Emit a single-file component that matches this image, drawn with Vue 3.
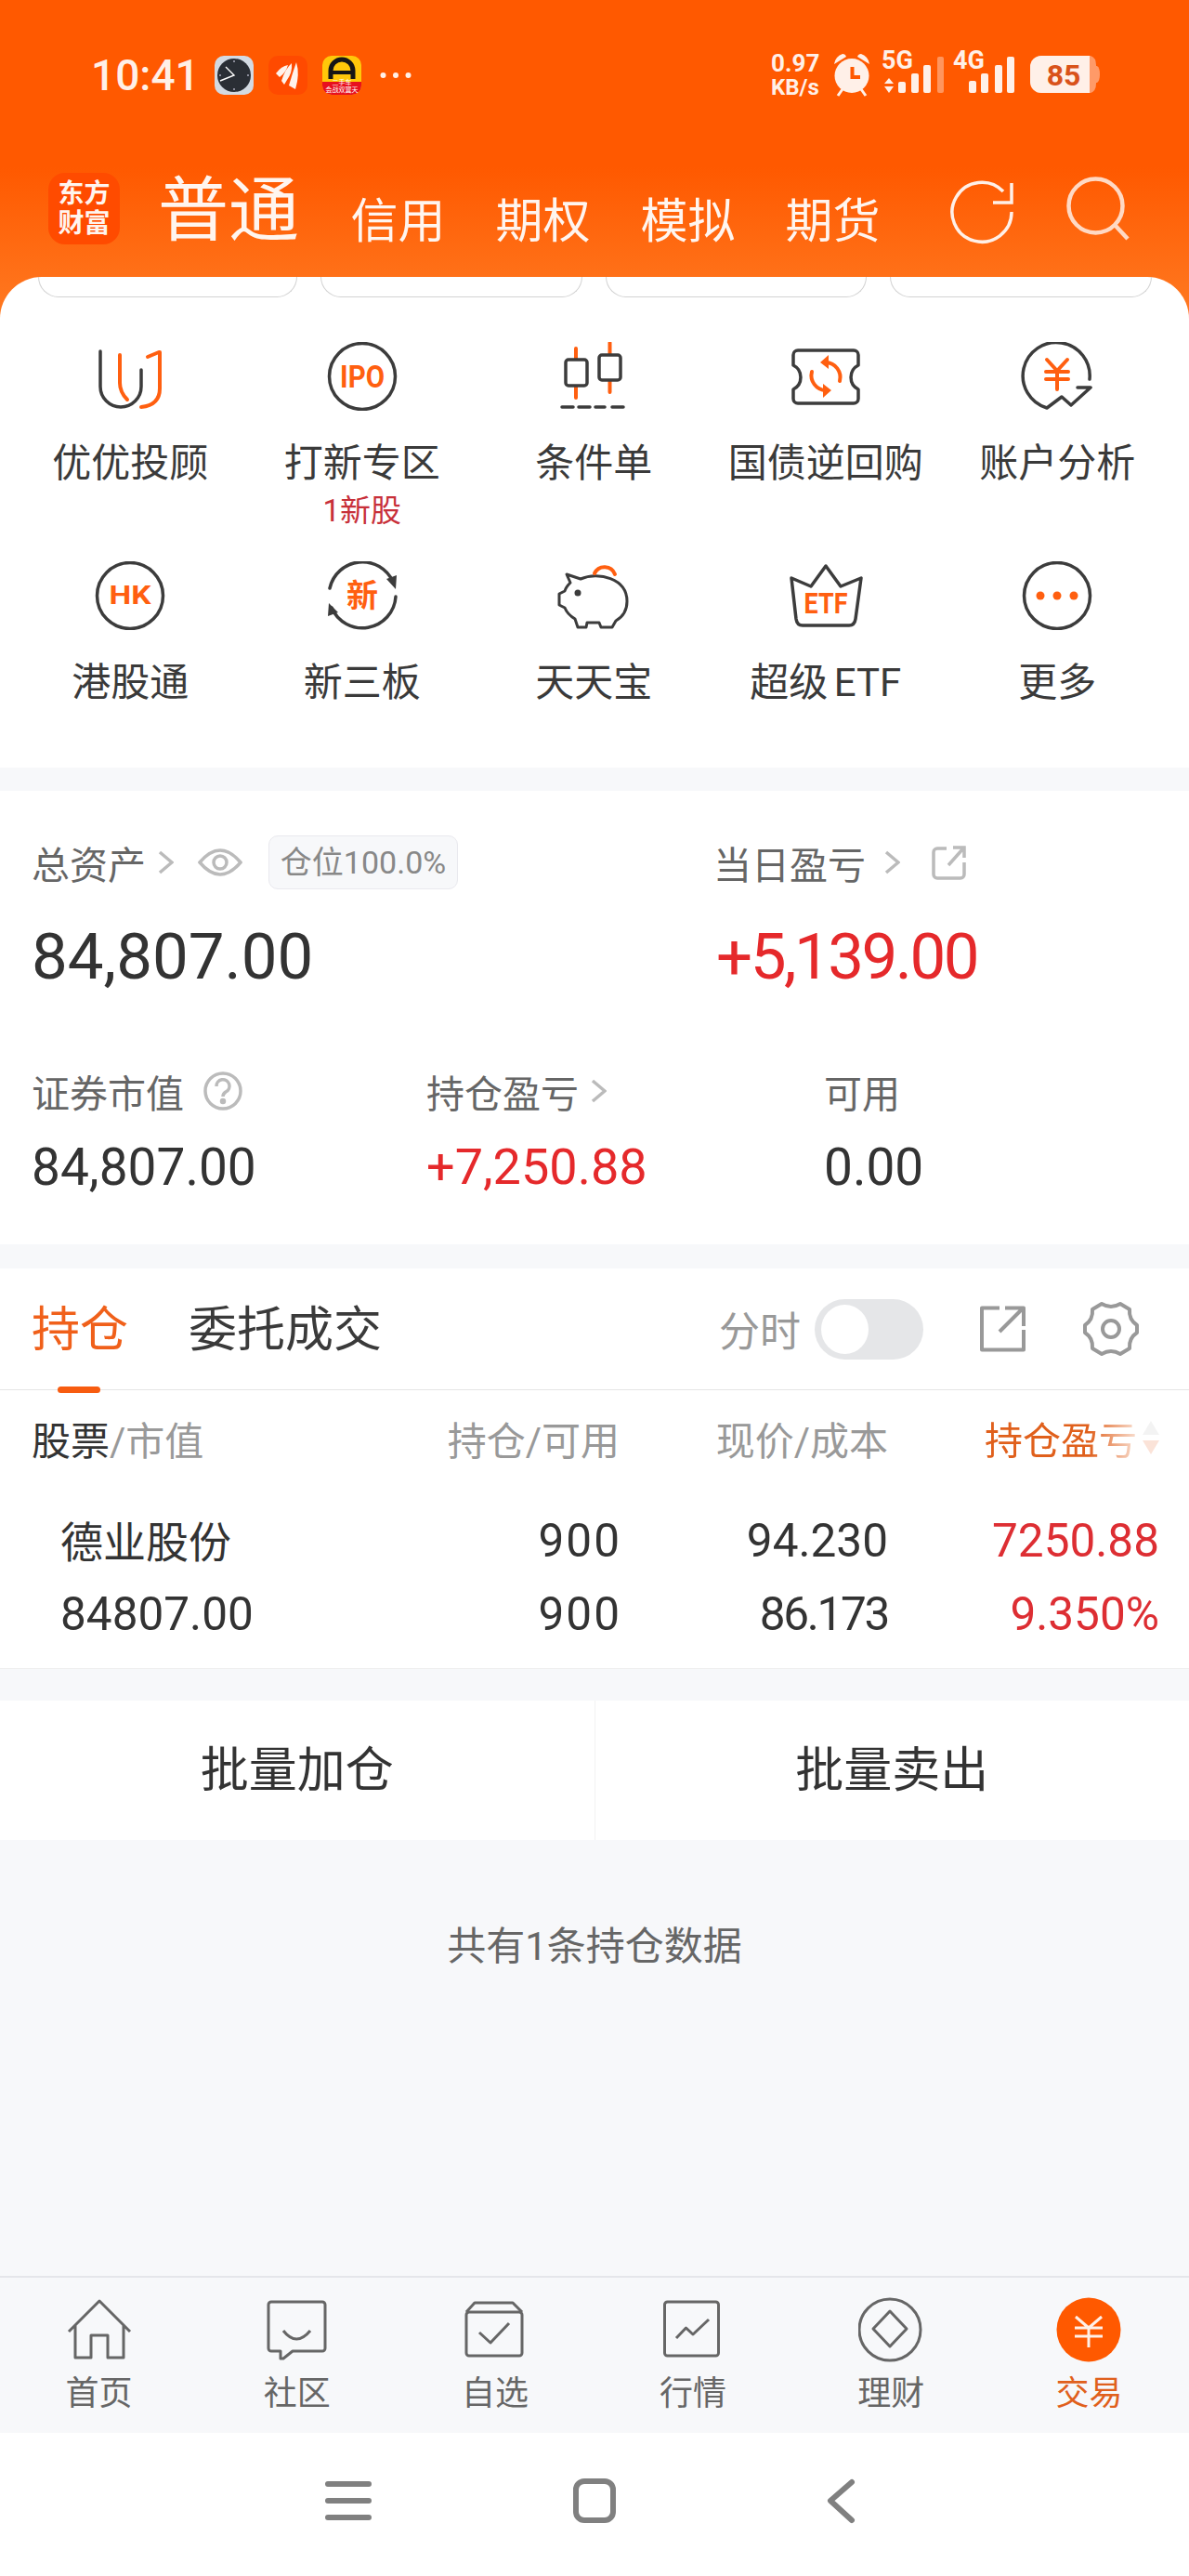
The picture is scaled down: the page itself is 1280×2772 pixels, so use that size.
<script setup>
const rowOne = [
  { icon: 'uu', label: '优优投顾' },
  { icon: 'ipo', label: '打新专区', sub: '1新股' },
  { icon: 'candle', label: '条件单' },
  { icon: 'coupon', label: '国债逆回购' },
  { icon: 'yen', label: '账户分析' }
]
const rowTwo = [
  { icon: 'hk', label: '港股通' },
  { icon: 'xin', label: '新三板' },
  { icon: 'pig', label: '天天宝' },
  { icon: 'etf', label: '超级 ETF' },
  { icon: 'more', label: '更多' }
]
const entries = [...rowOne, ...rowTwo]
const tabs = ['信用', '期权', '模拟', '期货']
const pills = [279, 282, 281, 282]
const bottomTabs = [
  { key: 'home', label: '首页' },
  { key: 'chat', label: '社区' },
  { key: 'fav', label: '自选' },
  { key: 'market', label: '行情' },
  { key: 'wealth', label: '理财' },
  { key: 'trade', label: '交易' }
]
</script>

<template>
  <div class="page">
    <div class="top">
      <div class="status">
        <span class="time">10:41</span>
        <svg class="app" viewBox="0 0 42 42">
          <rect width="42" height="42" rx="10" fill="#D3DAE2" />
          <circle cx="21" cy="21" r="18" fill="#2A2E35" />
          <path d="M21 5v2M21 35v2M5 21h2M35 21h2" stroke="#AAB" stroke-width="1.5" />
          <path d="M12 12L21 21L6 27" fill="none" stroke="#fff" stroke-width="1.4" />
        </svg>
        <svg class="app" viewBox="0 0 42 42">
          <rect width="42" height="42" rx="10" fill="#FF4A00" />
          <path d="M8 19Q14 11 21 10Q19 18 12 23Z" fill="#FFF3EC" />
          <path d="M14 27Q18 14 25 8Q26 18 20 26L17 31Z" fill="#FFF3EC" />
          <path d="M22 32Q26 18 30 7Q34 20 29 36Z" fill="#FFF3EC" />
        </svg>
        <svg class="app" viewBox="0 0 42 42">
          <rect width="42" height="42" rx="10" fill="#FFC80A" />
          <path d="M0 28H42V32A10 10 0 0 1 32 42H10A10 10 0 0 1 0 32Z" fill="#E8101E" />
          <path d="M9 25V16A12 12 0 0 1 33 16V25" fill="none" stroke="#161616" stroke-width="5" />
          <path d="M10 18H32" stroke="#161616" stroke-width="4" />
          <text x="21" y="31" class="tiny">二手车</text>
          <text x="21" y="39" class="tiny">会战双翼天</text>
        </svg>
        <svg class="dots" viewBox="0 0 34 8">
          <circle cx="3.5" cy="4" r="3" />
          <circle cx="17" cy="4" r="3" />
          <circle cx="30.5" cy="4" r="3" />
        </svg>
        <div class="status-right">
          <div class="net"><span class="net-num">0.97</span><span>KB/s</span></div>
          <svg width="40" height="50" viewBox="0 0 40 50">
            <circle cx="20" cy="25.5" r="18.5" fill="#FFF0E8" />
            <path d="M1 13Q2 5 10 2Q13 2 14 5Z" fill="#FFF0E8" />
            <path d="M39 13Q38 5 30 2Q27 2 26 5Z" fill="#FFF0E8" />
            <path d="M10 40L5 47M30 40L35 47" stroke="#FFF0E8" stroke-width="3" />
            <path d="M20.5 16V27H29" fill="none" stroke="#FF5900" stroke-width="4" />
          </svg>
          <svg class="signal" width="67" height="56" viewBox="0 -6 67 56">
            <text x="0" y="18" class="sig">5G</text>
            <path d="M8 28L13 34H3Z M8 44L13 37H3Z" fill="#FFF0E8" />
            <rect x="18" y="32" width="8" height="12" rx="2" fill="#FFF0E8" />
            <rect x="32" y="23" width="8" height="21" rx="2" fill="#FFF0E8" />
            <rect x="45" y="14" width="8" height="30" rx="2" fill="#FFF0E8" />
            <rect x="60" y="5" width="7" height="39" rx="2" fill="#FFF0E8" opacity=".4" />
          </svg>
          <svg class="signal" width="66" height="56" viewBox="0 -6 66 56">
            <text x="0" y="18" class="sig">4G</text>
            <rect x="17" y="31" width="8" height="13" rx="2" fill="#FFF0E8" />
            <rect x="30" y="23" width="8" height="21" rx="2" fill="#FFF0E8" />
            <rect x="45" y="14" width="8" height="30" rx="2" fill="#FFF0E8" />
            <rect x="58" y="5" width="8" height="39" rx="2" fill="#FFF0E8" />
          </svg>
          <svg width="75" height="50" viewBox="0 0 75 50">
            <path d="M12 4H65Q71 6 71 14V34Q71 42 65 44H12A12 12 0 0 1 0 32V16A12 12 0 0 1 12 4Z" fill="#FF9A68" />
            <path d="M12 4H64V44H12A12 12 0 0 1 0 32V16A12 12 0 0 1 12 4Z" fill="#FFF0E8" />
            <path d="M71 15H72Q75 17 75 24Q75 31 72 33H71Z" fill="#FF9A68" />
            <text x="36" y="36" class="batt">85</text>
          </svg>
        </div>
      </div>

      <div class="account-bar">
        <div class="logo"><span>东方</span><span>财富</span></div>
        <span class="account-main">普通</span>
        <div class="account-tabs">
          <span v-for="t in tabs" :key="t">{{ t }}</span>
        </div>
        <svg class="refresh" width="70" height="70" viewBox="0 0 70 70">
          <path d="M67 35A32 32 0 1 1 58 13" />
          <path d="M67 4V25H47" />
        </svg>
        <svg class="search" width="70" height="70" viewBox="0 0 70 70">
          <circle cx="32.5" cy="32.5" r="29" />
          <path d="M54 54L67 68" />
        </svg>
      </div>

      <div class="card">
        <div class="pills">
          <div v-for="(w, i) in pills" :key="i" class="pill" :style="{ width: w + 'px' }"></div>
        </div>
        <div class="entry-grid">
          <div v-for="e in entries" :key="e.label" class="entry">
            <svg class="entry-icon" width="90" height="74" viewBox="0 0 90 74">
              <template v-if="e.icon === 'uu'">
                <path d="M13 10V48A22 22 0 0 0 57 48V30" class="dk" />
                <path d="M34 14V44Q34 54 42 62" class="og" />
                <path d="M64 16L76 11H77V50Q77 68 57 70" class="og" />
              </template>
              <template v-else-if="e.icon === 'ipo'">
                <circle cx="45" cy="37" r="35.5" class="dk" />
                <text x="45" y="49" class="mark" font-size="34" textLength="48" lengthAdjust="spacingAndGlyphs">IPO</text>
              </template>
              <template v-else-if="e.icon === 'candle'">
                <path d="M26 7V60M62.500 1V54" class="og" stroke-width="5" />
                <rect x="15" y="19" width="23" height="28" rx="3" class="dk wh" />
                <rect x="51" y="14" width="23" height="27" rx="3" class="dk wh" />
                <path d="M11 70H23M29 70H41M47 70H57M65 70H77" class="dk" />
              </template>
              <template v-else-if="e.icon === 'coupon'">
                <path d="M15 9H75A5 5 0 0 1 80 14V25A14.600 14.600 0 0 0 80 51V61A5 5 0 0 1 75 66H15A5 5 0 0 1 10 61V51A14.600 14.600 0 0 0 10 25V14A5 5 0 0 1 15 9Z" class="dk" />
                <path d="M45 22A16 16 0 0 1 60 42M45 52A16 16 0 0 1 30 32" class="og" />
                <path d="M48 14V29L39 22ZM42 45V60L51 52Z" fill="#FF5F10" />
              </template>
              <template v-else-if="e.icon === 'yen'">
                <path d="M80 40A36 36 0 1 0 34 71L50 59L60 68L81 49H67" class="dk" />
                <path d="M34 19L45 31L56 19M33 32H57M33 40H57M45 31V51" class="og" stroke-width="5" />
              </template>
              <template v-else-if="e.icon === 'hk'">
                <circle cx="45" cy="37" r="35.500" class="dk" />
                <text x="45" y="46" class="mark" font-size="27" textLength="45" lengthAdjust="spacingAndGlyphs">HK</text>
              </template>
              <template v-else-if="e.icon === 'xin'">
                <path d="M10 29A36 36 0 0 1 78 22" class="dk" />
                <path d="M81 38A36 36 0 0 1 12 50" class="dk" />
                <path d="M81 30L71 19L82 15ZM9 45L19 55L8 59Z" fill="#3C3C3C" />
                <text x="45" y="49" class="mark" font-size="34">新</text>
              </template>
              <template v-else-if="e.icon === 'pig'">
                <path d="M16 14L31 19C50 11 81 18 81 43C81 53 76 60 69 64L65 71H53L51 66H38L37 71H28L25 62C20 59 16 55 14 50L8 47V35L14 32C15 28 18 25 20 23Z" class="dk thin" />
                <circle cx="28" cy="34" r="3.500" fill="#3C3C3C" />
                <path d="M46 13A12 12 0 0 1 68 14" class="og" />
              </template>
              <template v-else-if="e.icon === 'etf'">
                <path d="M8 18L29 27L45 5L61 27L83 18L77 62Q76 69 70 69H20Q14 69 13 62Z" class="dk" />
                <text x="45" y="56" class="mark" font-size="32" textLength="47" lengthAdjust="spacingAndGlyphs">ETF</text>
              </template>
              <template v-else>
                <circle cx="45" cy="37" r="35.500" class="dk" />
                <circle cx="27" cy="37" r="4.500" fill="#FF5F10" />
                <circle cx="45" cy="37" r="4.500" fill="#FF5F10" />
                <circle cx="63" cy="37" r="4.500" fill="#FF5F10" />
              </template>
            </svg>
            <div class="entry-label">{{ e.label }}</div>
            <div v-if="e.sub" class="entry-sub">{{ e.sub }}</div>
          </div>
        </div>
      </div>
    </div>

    <section class="assets">
      <div class="asset-row">
        <div class="col-total">
          <div class="label-line big">
            <span>总资产</span>
            <svg class="chev" width="17" height="26" viewBox="0 0 17 26"><path d="M2 2L15 13L2 24" /></svg>
            <svg class="eye" width="48" height="32" viewBox="0 0 48 32">
              <path d="M2 16Q24 -10 46 16Q24 42 2 16Z" />
              <circle cx="24" cy="16" r="7" />
            </svg>
            <span class="badge">仓位100.0%</span>
          </div>
          <div class="value-big">84,807.00</div>
        </div>
        <div class="col-today">
          <div class="label-line big">
            <span>当日盈亏</span>
            <svg class="chev" width="17" height="26" viewBox="0 0 17 26"><path d="M2 2L15 13L2 24" /></svg>
            <svg class="share-small" width="37" height="37" viewBox="0 0 37 37">
              <path d="M16 3H6A4 4 0 0 0 2 7V31A4 4 0 0 0 6 35H31A4 4 0 0 0 35 31V18" />
              <path d="M18 21L34 3M23 2H35V13" />
            </svg>
          </div>
          <div class="value-big red">+5,139.00</div>
        </div>
      </div>
      <div class="asset-row second">
        <div class="col-a">
          <div class="label-line">
            <span>证券市值</span>
            <svg class="help" width="42" height="42" viewBox="0 0 42 42">
              <circle cx="21" cy="21" r="19" />
              <path d="M14 16A7 7 0 1 1 24 22Q21 24 21 27" />
              <circle class="fill" cx="21" cy="32" r="1.500" />
            </svg>
          </div>
          <div class="value">84,807.00</div>
        </div>
        <div class="col-b">
          <div class="label-line">
            <span>持仓盈亏</span>
            <svg class="chev" width="17" height="26" viewBox="0 0 17 26"><path d="M2 2L15 13L2 24" /></svg>
          </div>
          <div class="value red">+7,250.88</div>
        </div>
        <div class="col-c">
          <div class="label-line"><span>可用</span></div>
          <div class="value">0.00</div>
        </div>
      </div>
    </section>

    <section class="positions">
      <div class="pos-tabs">
        <span class="pos-tab active">持仓</span>
        <span class="pos-tab">委托成交</span>
        <div class="pos-tools">
          <span class="fen">分时</span>
          <div class="toggle"><i></i></div>
          <svg class="tool share" width="50" height="50" viewBox="0 0 50 50">
            <path d="M22 2.500H3V47.500H48V26" />
            <path d="M22 28L47 3M28 2.500H48V22" />
          </svg>
          <svg class="tool gear" width="60" height="60" viewBox="0 0 60 60">
            <path d="M20 3Q30 9 40 3L50 9Q49 20 58 26V34Q49 40 50 51L40 57Q30 51 20 57L10 51Q11 40 2 34V26Q11 20 10 9Z" />
            <circle cx="30" cy="30" r="9" />
          </svg>
        </div>
      </div>
      <div class="t-head">
        <div><span class="dark">股票</span>/市值</div>
        <div class="r">持仓/可用</div>
        <div class="r">现价/成本</div>
        <div class="r sort">
          <span class="sort-text">持仓盈亏</span>
          <svg width="18" height="36" viewBox="0 0 18 36">
            <path d="M9 0L18 15H0Z" fill="#F3F3F3" />
            <path d="M9 36L18 21H0Z" fill="#FBE3D8" />
          </svg>
        </div>
      </div>
      <div class="t-row first">
        <div class="name">德业股份</div>
        <div class="r wide">900</div>
        <div class="r">94.230</div>
        <div class="r red2">7250.88</div>
      </div>
      <div class="t-row">
        <div class="name">84807.00</div>
        <div class="r wide">900</div>
        <div class="r narrow">86.173</div>
        <div class="r red2">9.350%</div>
      </div>
    </section>

    <section class="actions">
      <div class="action">批量加仓</div>
      <div class="action">批量卖出</div>
    </section>

    <div class="summary">共有1条持仓数据</div>

    <nav class="tabbar">
      <div v-for="t in bottomTabs" :key="t.key" class="tabitem" :class="{ on: t.key === 'trade' }">
        <svg width="70" height="70" viewBox="0 0 70 70">
          <path v-if="t.key === 'home'" d="M2 37L35 4L68 37M9 30V65H26V41H44V65H61V30" />
          <template v-else-if="t.key === 'chat'">
            <path d="M7 5H62A3 3 0 0 1 65 8V55A3 3 0 0 1 62 58H30L20 66H17V58H7A3 3 0 0 1 4 55V8A3 3 0 0 1 7 5Z" />
            <path d="M20 36Q34 54 49 36" />
          </template>
          <template v-else-if="t.key === 'fav'">
            <rect x="4" y="16" width="60" height="47" rx="3" />
            <path d="M4 16L13 6H54L64 16M18 38L30 49L50 28" />
          </template>
          <template v-else-if="t.key === 'market'">
            <rect x="4.500" y="5" width="58" height="58" rx="3" />
            <path d="M17 44L27.500 33L35 40L52 24" />
          </template>
          <template v-else-if="t.key === 'wealth'">
            <circle cx="34" cy="35" r="33" />
            <path d="M34 15L52 34L34 53L16 34Z" />
          </template>
          <template v-else>
            <circle class="dot" cx="35" cy="35" r="34.500" />
            <path class="yuan" d="M21 21L35 33L49 21M20 33H50M20 42H50M35 33V54" />
          </template>
        </svg>
        <span>{{ t.label }}</span>
      </div>
    </nav>

    <div class="sysnav">
      <svg width="60" height="60" viewBox="0 0 60 60"><path d="M8 12H52M8 30H52M8 48H52" /></svg>
      <svg width="60" height="60" viewBox="0 0 60 60"><rect x="10" y="9" width="40" height="42" rx="9" /></svg>
      <svg width="60" height="60" viewBox="0 0 60 60"><path d="M42 10L19 30L42 51" /></svg>
    </div>
  </div>
</template>

<style>
html, body { margin: 0; padding: 0; background: #F7F8FA; }
</style>

<style scoped>
.page {
  width: 1280px;
  height: 2772px;
  display: flex;
  flex-direction: column;
  background: #F7F8FA;
  font-family: Roboto, "Noto Sans CJK SC", sans-serif;
  color: #333;
  overflow: hidden;
}
svg { display: block; flex: none; }
.r { text-align: right; }

.top {
  background: linear-gradient(#FF5900 0, #FF5900 180px, #FF7A22 345px) no-repeat;
  background-size: 100% 345px;
}
.status {
  height: 162px;
  display: flex;
  align-items: center;
  padding: 0 96px 0 98px;
  color: #FFF0E8;
}
.time { font-size: 46px; font-weight: 500; width: 133px; line-height: 46px; }
.app { width: 42px; height: 42px; margin-right: 16px; }
.tiny { font-size: 7px; fill: #fff; text-anchor: middle; }
.dots { width: 34px; height: 8px; fill: #FFF0E8; margin-left: 4px; }
.status-right { margin-left: auto; display: flex; align-items: center; height: 50px; }
.status-right svg { margin-left: 12px; }
.status-right svg:nth-child(2) { margin-left: 13px; }
.status-right svg:nth-child(4) { margin-left: 10px; }
.status-right svg:nth-child(5) { margin-left: 17px; }
.status-right .signal { margin-bottom: 6px; }
.net { display: flex; flex-direction: column; font-size: 24px; font-weight: 700; line-height: 26px; width: 54px; }
.net-num { font-size: 26px; }
.sig { font-size: 27px; font-weight: 700; fill: #FFF0E8; }
.batt { font-size: 32px; font-weight: 700; fill: #D9521A; text-anchor: middle; }

.account-bar {
  height: 136px;
  display: flex;
  align-items: flex-start;
  padding-left: 52px;
  color: #FFF5EF;
}
.logo {
  width: 77px;
  height: 77px;
  margin-top: 24px;
  border-radius: 18px;
  background: #FF4B00;
  display: flex;
  flex-direction: column;
  align-items: center;
  justify-content: center;
  font-size: 28px;
  font-weight: 700;
  line-height: 32px;
}
.account-main { font-size: 76px; line-height: 88px; margin: 21px 55.5px 0 41px; width: 152px; }
.account-tabs { display: flex; gap: 54px; font-size: 51px; line-height: 60px; margin-top: 47px; }
.refresh { margin: 31px 0 0 74.5px; }
.refresh path { fill: none; stroke: #FFF0E8; stroke-width: 3.5; }
.search { margin: 27px 0 0 55px; }
.search circle, .search path { fill: none; stroke: #FFD9C4; stroke-width: 4.5; }

.card {
  background: #fff;
  border-radius: 45px 45px 0 0;
  height: 528px;
}
.pills { display: flex; gap: 25px; padding-left: 41px; height: 22px; }
.pill {
  box-sizing: border-box;
  height: 22px;
  border: 1.5px solid #D2D2D2;
  border-top: none;
  border-radius: 0 0 30px 30px;
}
.entry-grid {
  display: grid;
  grid-template-columns: repeat(5, 249.5px);
  grid-template-rows: 236px 222px;
  padding: 48px 17px 0 15.5px;
}
.entry { display: flex; flex-direction: column; align-items: center; }
.entry-label { font-size: 42px; line-height: 50px; margin-top: 32px; color: #3A3A3A; white-space: nowrap; word-spacing: -4px; }
.entry-sub { font-size: 33px; line-height: 40px; margin-top: 6px; color: #C8303A; }
.dk { fill: none; stroke: #3C3C3C; stroke-width: 3.5; stroke-linecap: round; stroke-linejoin: round; }
.thin { stroke-width: 3; }
.wh { fill: #fff; }
.og { fill: none; stroke: #FF5F10; stroke-width: 4; stroke-linecap: round; stroke-linejoin: round; }
.mark { fill: #FF5F10; font-weight: 700; text-anchor: middle; }

.assets { margin-top: 25px; height: 488px; box-sizing: border-box; padding: 47px 0 0 34px; background: #fff; }
.asset-row { display: flex; }
.asset-row.second { margin-top: 79px; }
.col-total { width: 734px; }
.col-a { width: 425px; }
.col-b { width: 428px; }
.label-line { display: flex; align-items: center; height: 50px; font-size: 41px; color: #666; white-space: nowrap; }
.label-line.big { height: 60px; }
.chev { margin-left: 13px; }
.col-today .chev { margin-left: 20px; }
.chev path, .eye path, .eye circle, .help path, .help circle, .share-small path {
  fill: none;
  stroke: #BBB;
  stroke-width: 3.5;
}
.eye { margin-left: 26px; }
.help { margin-left: 21px; }
.help .fill { fill: #BBB; }
.share-small { margin-left: 34px; }
.badge {
  margin-left: 28px;
  box-sizing: border-box;
  width: 204px;
  height: 58px;
  border: 1px solid #E9E9EE;
  border-radius: 10px;
  background: #F7F8FA;
  color: #888;
  font-size: 34px;
  line-height: 56px;
  text-align: center;
}
.value-big { font-size: 69px; line-height: 80px; margin-top: 32px; color: #333; }
.value-big.red { margin-left: 3px; letter-spacing: -2.5px; }
.value { font-size: 55px; line-height: 60px; margin-top: 27px; color: #333; }
.value.red { font-size: 54px; }
.red { color: #E5292B !important; }

.positions { margin-top: 26px; height: 431px; box-sizing: border-box; background: #fff; border-bottom: 1px solid #EEE; }
.pos-tabs {
  height: 131px;
  box-sizing: border-box;
  border-bottom: 1px solid #E5E5E5;
  display: flex;
  align-items: center;
  padding: 3px 54px 0 34px;
}
.pos-tab { position: relative; font-size: 52px; line-height: 60px; color: #3A3A3A; margin-right: 65px; }
.pos-tab.active { color: #F0601A; }
.pos-tab.active::after {
  content: "";
  position: absolute;
  left: 28px;
  width: 46px;
  bottom: -37px;
  height: 7px;
  border-radius: 4px;
  background: #F75C10;
}
.pos-tools { margin-left: auto; display: flex; align-items: center; margin-top: -3px; }
.fen { font-size: 44px; color: #999; margin-right: 15px; }
.toggle {
  width: 117px;
  height: 65px;
  border-radius: 33px;
  background: #E5E6E8;
  box-sizing: border-box;
  padding: 6px 7px;
}
.toggle i { display: block; width: 51px; height: 53px; border-radius: 50%; background: #fff; }
.tool path, .tool circle { fill: none; stroke: #999; stroke-width: 4; stroke-linejoin: round; }
.share { margin-left: 60px; }
.gear { margin-left: 62px; }

.t-head, .t-row {
  display: grid;
  grid-template-columns: 433px 200px 289px 292px;
  padding-left: 34px;
}
.t-head { height: 102px; align-items: center; font-size: 42px; color: #999; }
.dark { color: #333; }
.sort { display: flex; justify-content: flex-end; align-items: center; gap: 6px; font-size: 41px; }
.sort-text {
  color: #E0601C;
  -webkit-mask-image: linear-gradient(to right, #000 68%, rgba(0,0,0,.2) 100%);
  mask-image: linear-gradient(to right, #000 68%, rgba(0,0,0,.2) 100%);
}
.t-row { height: 78px; align-items: center; font-size: 49.5px; }
.t-row.first { margin-top: 20px; height: 80px; }
.t-row.first .name { font-size: 46px; margin-bottom: 4px; }
.name { padding-left: 31px; }
.wide { letter-spacing: 2px; margin-right: -2px; }
.narrow { letter-spacing: -2.3px; }
.red2 { color: #DD2E33; }

.actions { margin-top: 34px; height: 150px; display: flex; background: #fff; }
.action { flex: 1; font-size: 52px; line-height: 152px; text-align: center; color: #333; }
.action + .action { border-left: 1px solid #F2F2F2; }

.summary { flex: 1; padding-top: 85px; font-size: 42px; line-height: 60px; color: #666; text-align: center; }

.tabbar {
  height: 169px;
  box-sizing: border-box;
  border-top: 2px solid #E5E6EA;
  padding: 21px 1px 0 0;
  display: grid;
  grid-template-columns: repeat(6, 1fr);
}
.tabitem { display: flex; flex-direction: column; align-items: center; font-size: 36px; line-height: 40px; color: #666; }
.tabitem svg { margin-bottom: 14px; }
.tabitem path, .tabitem rect, .tabitem circle { fill: none; stroke: #666; stroke-width: 3; stroke-linejoin: round; }
.tabitem.on { color: #E0601C; }
.tabitem .dot { fill: #FF5900; stroke: none; }
.tabitem .yuan { stroke: #FFF0E8; stroke-width: 3; }

.sysnav {
  height: 154px;
  box-sizing: border-box;
  padding-bottom: 8px;
  background: #fff;
  display: flex;
  align-items: center;
  justify-content: center;
  gap: 205px;
}
.sysnav path, .sysnav rect { fill: none; stroke: #808080; stroke-width: 6; stroke-linecap: round; stroke-linejoin: round; }
</style>
